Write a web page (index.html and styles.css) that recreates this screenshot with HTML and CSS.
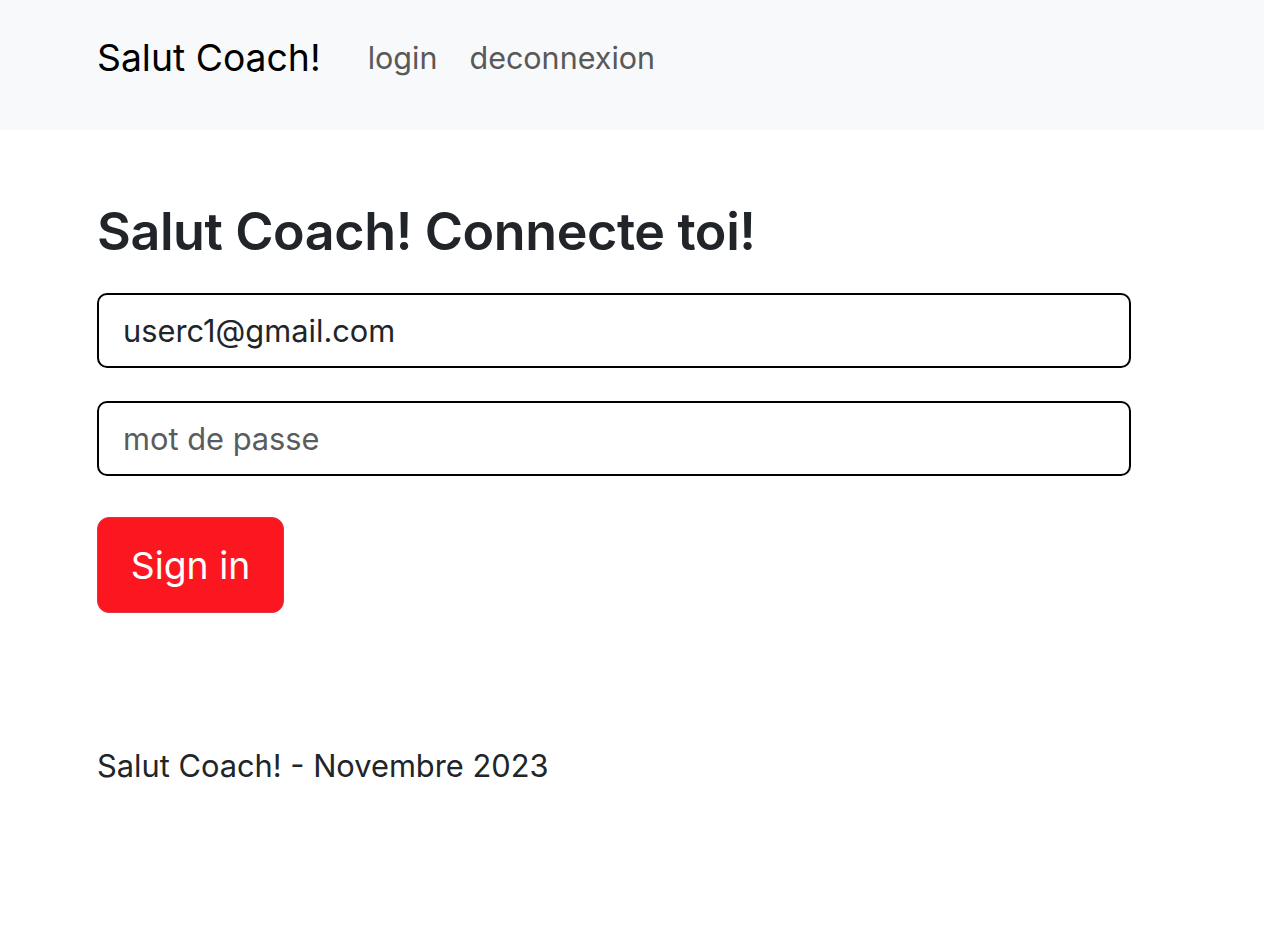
FILE: index.html
```html
<!DOCTYPE html>
<html lang="fr">
<head>
<meta charset="utf-8">
<title>Salut Coach!</title>
<link rel="stylesheet" href="styles.css">
</head>
<body>
<nav class="navbar">
  <a class="brand" href="#">Salut Coach!</a>
  <ul class="nav-links">
    <li><a href="#">login</a></li>
    <li><a href="#">deconnexion</a></li>
  </ul>
</nav>
<main class="content">
  <h1 class="title">Salut Coach! Connecte toi!</h1>
  <form class="login-form">
    <input class="field" type="email" value="userc1@gmail.com">
    <input class="field" type="password" placeholder="mot de passe">
    <button class="btn-signin" type="button">Sign in</button>
  </form>
  <footer class="footer">Salut Coach! - Novembre 2023</footer>
</main>
</body>
</html>
```
FILE: styles.css
```css
* { box-sizing: border-box; }
body {
  margin: 0;
  font-family: "Inter", "Liberation Sans", sans-serif;
  color: #212529;
  background: #fff;
}
.navbar {
  height: 130px;
  background: #f8f9fa;
  display: flex;
  align-items: flex-start;
  padding: 33px 0 0 97px;
}
.brand {
  font-size: 37.3px;
  color: #000;
  text-decoration: none;
  line-height: 50px;
  margin-right: 47px;
}
.nav-links {
  list-style: none;
  margin: 0;
  padding: 0;
  display: flex;
  gap: 32px;
}
.nav-links a {
  font-size: 30.5px;
  color: #595959;
  text-decoration: none;
  line-height: 50px;
}
.content {
  padding: 0 97px;
}
.title {
  margin: 70px 0 0;
  font-size: 52px;
  font-weight: 600;
  line-height: 64px;
  letter-spacing: -0.4px;
}
.login-form {
  display: flex;
  flex-direction: column;
  align-items: flex-start;
  margin-top: 29px;
}
.field {
  width: 1034px;
  height: 75px;
  border: 2px solid #000;
  border-radius: 10px;
  padding: 0 24px;
  font-family: inherit;
  font-size: 30.8px;
  color: #212529;
  margin-bottom: 33px;
  outline: none;
}
.field::placeholder { color: #595c5f; }
.btn-signin {
  margin-top: 8px;
  width: 187px;
  height: 96px;
  background: #fc1620;
  border: 1px solid #dc3545;
  border-radius: 12px;
  color: #fff;
  font-family: inherit;
  font-size: 37.3px;
}
.footer {
  margin-top: 131px;
  font-size: 30.8px;
  line-height: 44px;
}
```
